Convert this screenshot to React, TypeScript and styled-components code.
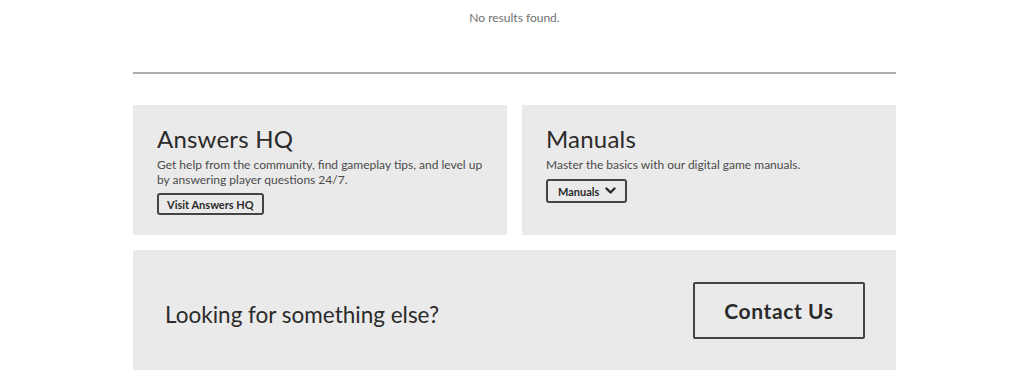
import React from "react";
import styled, { createGlobalStyle } from "styled-components";

const INK = "#2b2b2b";
const PANEL = "#eaeaea";

const Global = createGlobalStyle`
    body {
        margin: 0;
        background: #ffffff;
        font-family: "Lato", "Liberation Sans", sans-serif;
        color: ${INK};
    }
`;

export default function App() {
    return (
        <>
            <Global />
            <Page>
                <Empty>No results found.</Empty>
                <Divider />
                <CardRow>
                    <Card>
                        <CardTitle>Answers HQ</CardTitle>
                        <CardText>
                            Get help from the community, find gameplay tips, and level up
                            <br />
                            by answering player questions 24/7.
                        </CardText>
                        <SmallButton>Visit Answers HQ</SmallButton>
                    </Card>
                    <Card>
                        <CardTitle>Manuals</CardTitle>
                        <CardText>Master the basics with our digital game manuals.</CardText>
                        <SmallButton $pad="0 9px 0 10px" $height={24} $top={7}>
                            Manuals
                            <svg width="11" height="8" viewBox="0 0 11 8" fill="none">
                                <path d="M1.5 1.5 L5.5 5.5 L9.5 1.5" stroke={INK} strokeWidth="2.4" strokeLinecap="round" strokeLinejoin="round" />
                            </svg>
                        </SmallButton>
                    </Card>
                </CardRow>
                <ContactBar>
                    <ContactText>Looking for something else?</ContactText>
                    <BigButton>Contact Us</BigButton>
                </ContactBar>
            </Page>
        </>
    );
}

const Page = styled.div`
    width: 763px;
    margin-left: 133px;
    display: flex;
    flex-direction: column;
`;

const Empty = styled.p`
    margin: 10px 0 0;
    text-align: center;
    font-size: 12px;
    line-height: 16px;
    color: #707070;
`;

const Divider = styled.hr`
    margin: 46px 0 0;
    border: 0;
    height: 2px;
    background: #b0b0b0;
`;

const CardRow = styled.div`
    margin-top: 31px;
    display: grid;
    grid-template-columns: 1fr 1fr;
    gap: 15px;
`;

const Card = styled.div`
    background: ${PANEL};
    height: 130px;
    box-sizing: border-box;
    padding: 19px 24px 0;
    display: flex;
    flex-direction: column;
    align-items: flex-start;
`;

const CardTitle = styled.h2`
    margin: 0;
    font-size: 24px;
    font-weight: 400;
    line-height: 30px;
    letter-spacing: 0.2px;
    color: ${INK};
`;

const CardText = styled.p`
    margin: 3px 0 0;
    font-size: 12px;
    line-height: 15px;
    white-space: nowrap;
    color: #4a4a4a;
`;

const SmallButton = styled.button<{ $pad?: string; $height?: number; $top?: number }>`
    margin-top: ${(p) => p.$top || 6}px;
    height: ${(p) => p.$height || 22}px;
    padding: ${(p) => p.$pad || "0 8px"};
    display: inline-flex;
    align-items: center;
    gap: 6px;
    background: transparent;
    border: 2px solid #444;
    border-radius: 3px;
    font-family: inherit;
    font-size: 11px;
    font-weight: 700;
    color: ${INK};
    cursor: pointer;
`;

const ContactBar = styled.div`
    margin-top: 15px;
    height: 120px;
    background: ${PANEL};
    display: flex;
    align-items: center;
    justify-content: space-between;
    padding: 0 31px 0 32px;
`;

const ContactText = styled.p`
    margin: 8px 0 0;
    font-size: 22.5px;
    font-weight: 400;
    color: ${INK};
`;

const BigButton = styled.button`
    width: 172px;
    height: 57px;
    background: transparent;
    border: 2px solid #444;
    border-radius: 2px;
    font-family: inherit;
    font-size: 21px;
    font-weight: 700;
    letter-spacing: 0.6px;
    color: ${INK};
    cursor: pointer;
`;
